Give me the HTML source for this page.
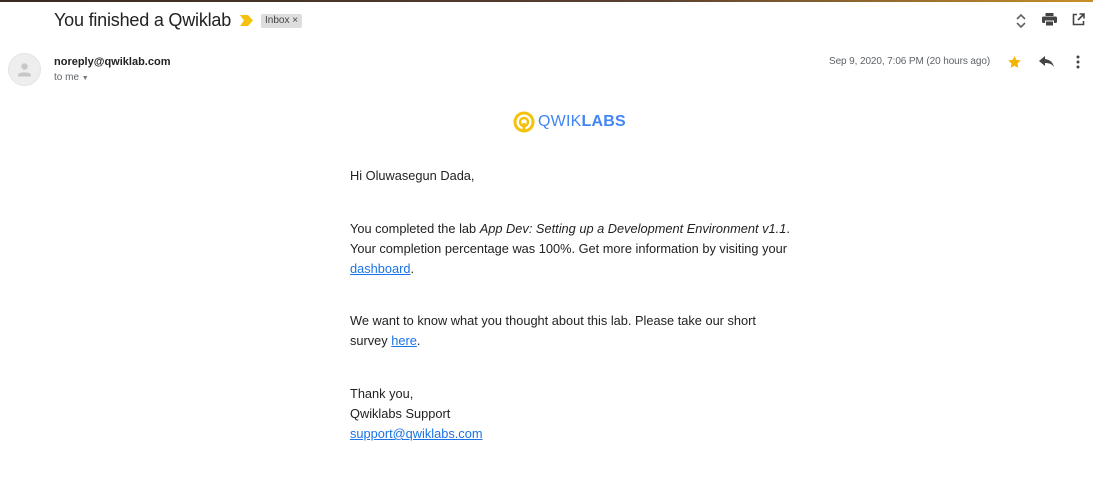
<!DOCTYPE html>
<html><head><meta charset="utf-8"><style>
*{margin:0;padding:0;box-sizing:border-box}
body{width:1093px;height:478px;background:#fff;font-family:"Liberation Sans",Arial,sans-serif;position:relative;overflow:hidden;color:#222}
.topbar{position:absolute;left:0;top:0;width:1093px;height:2px;background:linear-gradient(90deg,#3a2a20,#5a4030 60%,#c8902a)}
.abs{position:absolute;white-space:nowrap}
.subj{left:54px;top:10px;font-size:18px;color:#222;letter-spacing:-0.2px}
.inbox{left:261px;top:14px;background:#ddd;color:#444;font-size:10px;padding:1px 4px;border-radius:2px;height:14px;line-height:12px}
.avatar{left:8px;top:53px;width:33px;height:33px;border-radius:50%;background:#eee;border:1px solid #e4e4e4}
.from{left:54px;top:56px;font-size:11px;font-weight:bold;color:#222}
.tome{left:54px;top:72px;font-size:10px;color:#5f6368}
.date{left:829px;top:56px;font-size:10px;color:#5f6368;letter-spacing:-0.1px}
.body{left:350px;font-size:12.8px;line-height:20px;color:#222}
a{color:#1a73e8;text-decoration:underline}
</style></head><body>
<div class="topbar"></div>
<div class="abs subj">You finished a Qwiklab</div>
<svg class="abs" style="left:240px;top:15px" width="14" height="11" viewBox="0 0 14 11"><path d="M0 0h8l5 5.5L8 11H0l4-5.5z" fill="#f4c20d"/></svg>
<div class="abs inbox">Inbox ×</div>
<svg class="abs" style="left:1015px;top:13px" width="12" height="16" viewBox="0 0 12 16"><path d="M2 6l4-4 4 4M2 10l4 4 4-4" stroke="#5f6368" stroke-width="1.6" fill="none"/></svg>
<svg class="abs" style="left:1042px;top:13px" width="15" height="14" viewBox="0 0 15 14"><rect x="3.5" y="0" width="8" height="3" fill="#444"/><rect x="0" y="3.5" width="15" height="6.5" rx="1.5" fill="#444"/><rect x="3.5" y="8" width="8" height="5" fill="#444" stroke="#fff" stroke-width="1"/></svg>
<svg class="abs" style="left:1072px;top:13px" width="13" height="13" viewBox="0 0 13 13"><path d="M5 1.5H1.5v10h10V8M7.5 1h4.5v4.5M12 1L6 7" stroke="#444" stroke-width="1.6" fill="none"/></svg>
<div class="abs avatar"><svg width="33" height="33" viewBox="0 0 33 33" style="position:absolute;left:-1px;top:-1px"><circle cx="16.5" cy="13.5" r="3.2" fill="#c8c8c8"/><path d="M10 22c0-3.5 13-3.5 13 0v1.5H10z" fill="#c8c8c8"/></svg></div>
<div class="abs from">noreply@qwiklab.com</div>
<div class="abs tome">to me <span style="font-size:7px;color:#777">▼</span></div>
<div class="abs date">Sep 9, 2020, 7:06 PM (20 hours ago)</div>
<svg class="abs" style="left:1008px;top:56px" width="13" height="12" viewBox="0 0 24 23"><path d="M12 0l3.5 7.5 8.5 1-6.3 5.8 1.7 8.5L12 18.6 4.6 22.8l1.7-8.5L0 8.5l8.5-1z" fill="#f4b400"/></svg>
<svg class="abs" style="left:1039px;top:56px" width="15" height="11" viewBox="0 0 15 11"><path d="M6 0L0 5l6 5V7c4 0 7 1 9 4-1-4-3-7-9-8z" fill="#444"/></svg>
<svg class="abs" style="left:1076px;top:55px" width="4" height="14" viewBox="0 0 4 14"><circle cx="2" cy="2" r="1.5" fill="#444"/><circle cx="2" cy="7" r="1.5" fill="#444"/><circle cx="2" cy="12" r="1.5" fill="#444"/></svg>
<svg class="abs" style="left:513px;top:111px" width="22" height="22" viewBox="0 0 22 22"><circle cx="11" cy="11" r="9" fill="none" stroke="#f4c20d" stroke-width="3"/><circle cx="11" cy="11" r="4" fill="none" stroke="#f4c20d" stroke-width="2.5"/><rect x="9.5" y="12" width="3" height="8" fill="#f4c20d"/></svg>
<div class="abs" style="left:538px;top:113px;font-size:16px;color:#4285f4;letter-spacing:0.2px">QWIK<b>LABS</b></div>
<div class="abs body" style="top:166px">Hi Oluwasegun Dada,</div>
<div class="abs body" style="top:219px">You completed the lab <i>App Dev: Setting up a Development Environment v1.1</i>.<br>Your completion percentage was 100%. Get more information by visiting your<br><a>dashboard</a>.</div>
<div class="abs body" style="top:311px">We want to know what you thought about this lab. Please take our short<br>survey <a>here</a>.</div>
<div class="abs body" style="top:384px">Thank you,<br>Qwiklabs Support<br><a>support@qwiklabs.com</a></div>
</body></html>
